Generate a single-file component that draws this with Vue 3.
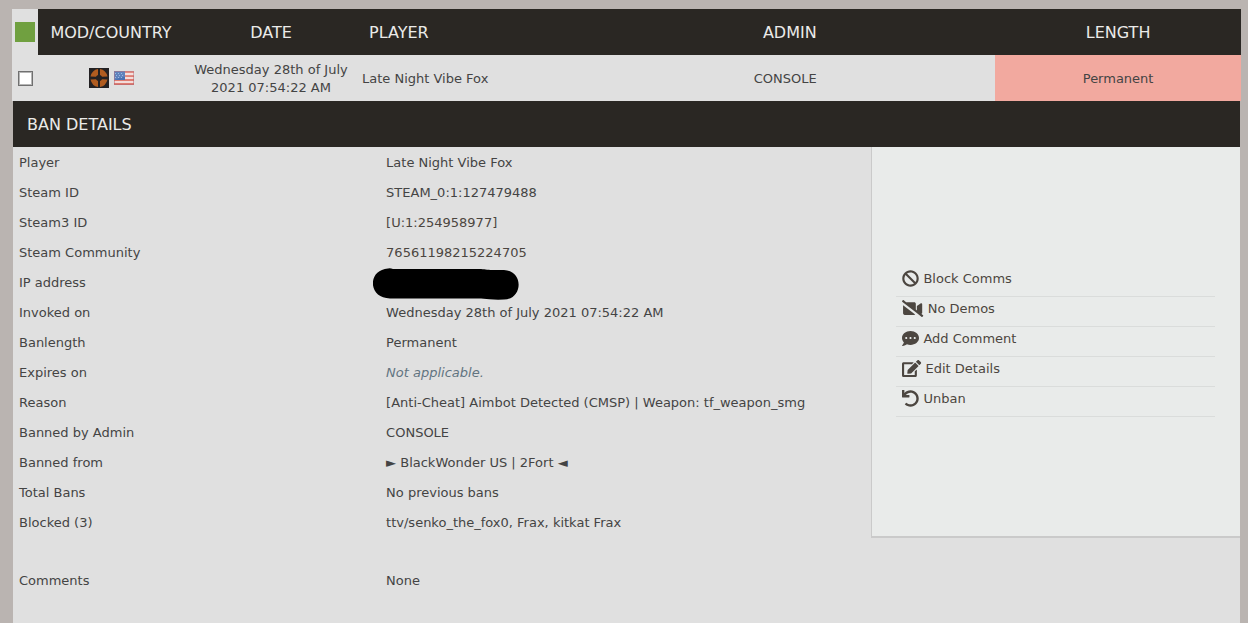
<script setup>
const details = [
  { label: 'Player', value: 'Late Night Vibe Fox' },
  { label: 'Steam ID', value: 'STEAM_0:1:127479488' },
  { label: 'Steam3 ID', value: '[U:1:254958977]', href: '#steam3' },
  { label: 'Steam Community', value: '76561198215224705', href: '#community' },
  { label: 'IP address', redacted: true },
  { label: 'Invoked on', value: 'Wednesday 28th of July 2021 07:54:22 AM' },
  { label: 'Banlength', value: 'Permanent' },
  { label: 'Expires on', value: 'Not applicable.', muted: true },
  { label: 'Reason', value: '[Anti-Cheat] Aimbot Detected (CMSP) | Weapon: tf_weapon_smg' },
  { label: 'Banned by Admin', value: 'CONSOLE' },
  { label: 'Banned from', value: '► BlackWonder US | 2Fort ◄' },
  { label: 'Total Bans', value: 'No previous bans' },
  { label: 'Blocked (3)', value: 'ttv/senko_the_fox0, Frax, kitkat Frax' }
]

const actions = [
  {
    label: 'Block Comms',
    width: 512,
    path: 'M256 8C119.034 8 8 119.033 8 256s111.034 248 248 248 248-111.034 248-248S392.967 8 256 8zm130.108 117.892c65.448 65.448 70 165.481 20.677 235.637L150.47 105.216c70.204-49.356 170.226-44.735 235.638 20.676zM125.892 386.108c-65.448-65.448-70-165.481-20.677-235.637L361.53 406.784c-70.203 49.356-170.226 44.736-235.638-20.676z'
  },
  {
    label: 'No Demos',
    width: 640,
    path: 'M633.8 458.1l-55-42.5c15.4-1.4 29.2-13.7 29.2-31.1v-257c0-25.5-29.1-40.4-50.4-25.8L448 177.3v137.2l-32-24.7v-178c0-26.4-21.4-47.8-47.8-47.8H123.9L45.5 3.4C38.5-2 28.5-.8 23 6.2L3.4 31.4c-5.4 7-4.2 17 2.8 22.4L42.7 82 416 370.6l178.5 138c7 5.4 17 4.2 22.5-2.8l19.6-25.3c5.5-6.9 4.2-17-2.8-22.4zM32 400.2c0 26.4 21.4 47.8 47.8 47.8h288.4c11.2 0 21.4-4 29.6-10.5L32 154.7v245.5z'
  },
  {
    label: 'Add Comment',
    width: 512,
    path: 'M256 32C114.6 32 0 125.1 0 240c0 49.6 21.4 95 57 130.7C44.5 421.1 2.7 466 2.2 466.5c-2.2 2.3-2.8 5.7-1.5 8.7S4.8 480 8 480c66.3 0 116-31.8 140.6-51.4 32.7 12.3 69 19.4 107.4 19.4 141.4 0 256-93.1 256-208S397.4 32 256 32zM128 272c-17.7 0-32-14.3-32-32s14.3-32 32-32 32 14.3 32 32-14.3 32-32 32zm128 0c-17.7 0-32-14.3-32-32s14.3-32 32-32 32 14.3 32 32-14.3 32-32 32zm128 0c-17.7 0-32-14.3-32-32s14.3-32 32-32 32 14.3 32 32-14.3 32-32 32z'
  },
  {
    label: 'Edit Details',
    width: 576,
    path: 'M402.6 83.2l90.2 90.2c3.8 3.8 3.8 10 0 13.8L274.4 405.6l-92.8 10.3c-12.4 1.4-22.9-9.1-21.5-21.5l10.3-92.8L388.8 83.2c3.8-3.8 10-3.8 13.8 0zm162-22.9l-48.8-48.8c-15.2-15.2-39.9-15.2-55.2 0l-35.4 35.4c-3.8 3.8-3.8 10 0 13.8l90.2 90.2c3.8 3.8 10 3.8 13.8 0l35.4-35.4c15.2-15.3 15.2-40 0-55.2zM384 346.2V448H64V128h229.8c3.2 0 6.2-1.3 8.5-3.5l40-40c7.6-7.6 2.2-20.5-8.5-20.5H48C21.5 64 0 85.5 0 112v352c0 26.5 21.5 48 48 48h352c26.5 0 48-21.5 48-48V306.2c0-10.7-12.9-16-20.5-8.5l-40 40c-2.2 2.3-3.5 5.3-3.5 8.5z'
  },
  {
    label: 'Unban',
    width: 512,
    path: 'M212.333 224.333H12c-6.627 0-12-5.373-12-12V12C0 5.373 5.373 0 12 0h48c6.627 0 12 5.373 12 12v78.112C117.773 39.279 184.26 7.47 258.175 8.007c136.906.994 246.448 111.623 246.157 248.532C504.041 393.258 393.12 504 256.333 504c-64.089 0-122.496-24.313-166.51-64.215-5.099-4.622-5.334-12.554-.467-17.42l33.967-33.967c4.474-4.474 11.662-4.717 16.401-.525C170.76 415.336 211.58 432 256.333 432c97.268 0 176-78.716 176-176 0-97.267-78.716-176-176-176-58.496 0-110.28 28.476-142.274 72.333h98.274c6.627 0 12 5.373 12 12v48c0 6.627-5.373 12-12 12z'
  }
]
</script>

<template>
  <main class="page">
    <table class="bans">
      <colgroup>
        <col class="c-check" />
        <col class="c-mod" />
        <col class="c-date" />
        <col />
        <col class="c-admin" />
        <col class="c-length" />
      </colgroup>
      <thead>
        <tr>
          <td class="media"><button class="tick-all" type="button" aria-label="Select all"></button></td>
          <th>MOD/COUNTRY</th>
          <th>DATE</th>
          <th class="player-head">PLAYER</th>
          <th class="admin-head">ADMIN</th>
          <th>LENGTH</th>
        </tr>
      </thead>
      <tbody>
        <tr>
          <td class="media"><input class="tick" type="checkbox" aria-label="Select ban" /></td>
          <td class="media">
            <div class="icons">
              <svg width="20" height="20" viewBox="0 0 20 20" aria-hidden="true">
                <rect width="20" height="20" fill="#232123" />
                <g fill="#b05c20">
                  <path d="M9 1Q3 2 1.500 8.500L7 8.800Q7.500 7.500 9 7z" />
                  <path d="M11 1Q17 2 18.500 8.500L13 8.800Q12.500 7.500 11 7z" />
                  <path d="M9 19Q3 18 1.500 11.500L7 11.200Q7.500 12.500 9 13z" />
                  <path d="M11 19Q17 18 18.500 11.500L13 11.200Q12.500 12.500 11 13z" />
                </g>
              </svg>
              <svg width="20" height="14" viewBox="0 0 20 14" aria-hidden="true">
                <rect width="20" height="14" fill="#f3dcda" />
                <path d="M0 1h20M0 5h20M0 9h20M0 13h20" stroke="#de7d72" stroke-width="2" />
                <rect width="11" height="9" fill="#4a72b4" />
                <path d="M1 2.500h9M2 4.500h8M1 6.500h9" stroke="#8fb0dc" stroke-dasharray="1 2" />
                <rect x="0.5" y="0.5" width="19" height="13" fill="none" stroke="#b0606c" stroke-opacity="0.5" />
                <path d="M0 0h20v5Q9 5 0 9z" fill="#fff" fill-opacity="0.12" />
              </svg>
            </div>
          </td>
          <td>Wednesday 28th of July 2021 07:54:22 AM</td>
          <td class="player">Late Night Vibe Fox</td>
          <td class="admin">CONSOLE</td>
          <td class="length">Permanent</td>
        </tr>
      </tbody>
    </table>

    <section class="detail">
      <h2>BAN DETAILS</h2>
      <table class="info">
        <colgroup>
          <col class="c-label" />
          <col />
          <col class="c-actions" />
        </colgroup>
        <tbody>
          <tr v-for="(d, i) in details" :key="d.label">
            <th scope="row">{{ d.label }}</th>
            <td>
              <div v-if="d.redacted" class="redacted">
                <svg width="146" height="32" viewBox="0 0 146 32" aria-hidden="true">
                  <path d="M15 .5Q17-.2 20 1L106 1C112 1 113 2 120 2L131 2C151 3 150 31 131 31.500Q119 32 108 30.500L17 30.500C-5 30.500-6 2 15 .5z" />
                </svg>
              </div>
              <a v-else-if="d.href" :href="d.href">{{ d.value }}</a>
              <em v-else-if="d.muted">{{ d.value }}</em>
              <template v-else>{{ d.value }}</template>
            </td>
            <td v-if="i === 0" class="actions" :rowspan="details.length">
              <ul>
                <li v-for="a in actions" :key="a.label">
                  <a href="#action">
                    <svg class="glyph" :viewBox="`0 0 ${a.width} 512`" aria-hidden="true">
                      <path :d="a.path" fill="currentColor" />
                    </svg>
                    <span>{{ a.label }}</span>
                  </a>
                </li>
              </ul>
            </td>
          </tr>
          <tr class="comments">
            <th scope="row">Comments</th>
            <td colspan="2">None</td>
          </tr>
        </tbody>
      </table>
    </section>
  </main>
</template>

<style>
html,
body {
  margin: 0;
  background: #bab4b1;
}
</style>

<style scoped>
.page {
  padding: 9px 7px 0 12px;
  font: 13px/18px "DejaVu Sans", sans-serif;
  color: #444;
}

table {
  width: 100%;
  border-collapse: collapse;
  table-layout: fixed;
}

th,
td {
  box-sizing: border-box;
  padding: 2px 0 0;
  font-weight: inherit;
}

a {
  color: #4c4640;
  text-decoration: none;
}

.bans td,
.bans th {
  height: 46px;
  text-align: center;
}

.bans td {
  background: #e0e0e0;
}

.bans th,
h2 {
  background: #2a2723;
  color: #ebebe9;
  font-size: 16px;
  font-weight: 400;
}

.bans .media {
  padding-top: 0;
}

.c-check {
  width: 26px;
}

.c-mod {
  width: 146px;
}

.c-date {
  width: 174px;
}

.c-admin {
  width: 34%;
}

.c-length {
  width: 20%;
}

.bans .player-head {
  padding-left: 11px;
  text-align: left;
}

.bans .player {
  padding-left: 4px;
  text-align: left;
}

.bans .admin-head {
  padding-left: 7px;
}

.bans .admin {
  padding-right: 2px;
}

.bans .length {
  background: #f2a99f;
}

.tick-all {
  display: block;
  width: 20px;
  height: 20px;
  margin: 0 auto;
  padding: 0;
  border: 0;
  background: #70a040;
}

.tick {
  display: block;
  appearance: none;
  box-sizing: border-box;
  width: 15px;
  height: 15px;
  margin: 0 auto;
  border: 1px solid #707070;
  border-radius: 0;
  background: #fff;
  box-shadow: inset 0 0 0 1px #b5b5b5;
}

.icons {
  display: flex;
  align-items: center;
  justify-content: center;
  gap: 5px;
}

.detail {
  min-height: 522px;
  margin: 0 1px;
  background: #e0e0e0;
}

h2 {
  margin: 0;
  padding: 2px 14px 0;
  line-height: 44px;
}

.info th,
.info td {
  height: 30px;
  text-align: left;
}

.info th {
  padding-left: 6px;
}

.info td {
  padding-left: 5px;
}

.c-label,
.c-actions {
  width: 30%;
}

em {
  color: #627480;
}

.redacted {
  position: relative;
  height: 18px;
}

.redacted svg {
  position: absolute;
  top: -6px;
  left: -13px;
}

.info .actions {
  padding: 0 25px 0 24px;
  border-left: 1px solid #cacaca;
  border-bottom: 2px solid #cacaca;
  background: #e9ebea;
}

ul {
  margin: 0;
  padding: 0;
  list-style: none;
}

li {
  border-bottom: 1px solid #dadcdb;
}

li a {
  display: flex;
  align-items: center;
  gap: 4px;
  box-sizing: border-box;
  height: 29px;
  padding: 0 6px 5px;
}

.glyph {
  height: 17px;
  flex: none;
}

.info .comments th,
.info .comments td {
  height: 85px;
}
</style>
